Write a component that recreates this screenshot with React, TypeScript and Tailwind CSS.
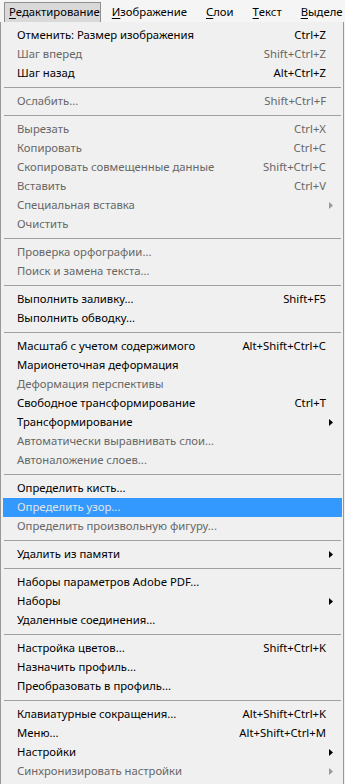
import React from "react";

type Item =
  | { sep: true }
  | { label: string; key?: string; off?: boolean; sub?: boolean; active?: boolean; sep?: false };

const items: Item[] = [
  { label: "Отменить: Размер изображения", key: "Ctrl+Z" },
  { label: "Шаг вперед", key: "Shift+Ctrl+Z", off: true },
  { label: "Шаг назад", key: "Alt+Ctrl+Z" },
  { sep: true },
  { label: "Ослабить...", key: "Shift+Ctrl+F", off: true },
  { sep: true },
  { label: "Вырезать", key: "Ctrl+X", off: true },
  { label: "Копировать", key: "Ctrl+C", off: true },
  { label: "Скопировать совмещенные данные", key: "Shift+Ctrl+C", off: true },
  { label: "Вставить", key: "Ctrl+V", off: true },
  { label: "Специальная вставка", off: true, sub: true },
  { label: "Очистить", off: true },
  { sep: true },
  { label: "Проверка орфографии...", off: true },
  { label: "Поиск и замена текста...", off: true },
  { sep: true },
  { label: "Выполнить заливку...", key: "Shift+F5" },
  { label: "Выполнить обводку..." },
  { sep: true },
  { label: "Масштаб с учетом содержимого", key: "Alt+Shift+Ctrl+C" },
  { label: "Марионеточная деформация" },
  { label: "Деформация перспективы", off: true },
  { label: "Свободное трансформирование", key: "Ctrl+T" },
  { label: "Трансформирование", sub: true },
  { label: "Автоматически выравнивать слои...", off: true },
  { label: "Автоналожение слоев...", off: true },
  { sep: true },
  { label: "Определить кисть..." },
  { label: "Определить узор...", active: true },
  { label: "Определить произвольную фигуру...", off: true },
  { sep: true },
  { label: "Удалить из памяти", sub: true },
  { sep: true },
  { label: "Наборы параметров Adobe PDF..." },
  { label: "Наборы", sub: true },
  { label: "Удаленные соединения..." },
  { sep: true },
  { label: "Настройка цветов...", key: "Shift+Ctrl+K" },
  { label: "Назначить профиль..." },
  { label: "Преобразовать в профиль..." },
  { sep: true },
  { label: "Клавиатурные сокращения...", key: "Alt+Shift+Ctrl+K" },
  { label: "Меню...", key: "Alt+Shift+Ctrl+M" },
  { label: "Настройки", sub: true },
  { label: "Синхронизировать настройки", off: true, sub: true },
];

const tabs = [
  { first: "И", rest: "зображение" },
  { first: "С", rest: "лои" },
  { first: "Т", rest: "екст" },
  { first: "В", rest: "ыделе" },
];

function Arrow({ off }: { off?: boolean }) {
  return (
    <svg width="4" height="7" viewBox="0 0 4 7" className="shrink-0">
      <path d="M0 0 L4 3.5 L0 7 Z" fill={off ? "#9a9a9a" : "#000"} />
    </svg>
  );
}

export default function App() {
  return (
    <div className="w-[345px] h-[784px] overflow-hidden bg-[#f0f0f0] text-[11.3px] font-['Noto_Sans',sans-serif]">
      {/* Menu bar */}
      <div className="h-[22px] flex items-end bg-[#f5f5f5] whitespace-nowrap">
        <div className="ml-[4px] mr-[1px] h-[20px] w-[104px] flex items-center pl-[4px] bg-[#d9d9d9] border border-b-0 border-[#8e8f8f] text-black">
          <span className="underline underline-offset-2">Р</span>едактирование
        </div>
        {tabs.map((t, i) => (
          <div key={i} className="h-[20px] flex items-center pl-[10px] pr-[9px] text-black">
            <span className="underline underline-offset-2">{t.first}</span>
            {t.rest}
          </div>
        ))}
      </div>

      {/* Dropdown */}
      <div className="border-l border-r border-[#979797] w-[344px] h-[762px] bg-[#f0f0f0] pt-[4px] pl-[2px] pr-[1px]">
        {items.map((it, i) =>
          it.sep ? (
            <div key={i} className="h-[9px] flex items-center px-[1px]">
              <div className="h-px w-full bg-[#a0a0a0]" />
            </div>
          ) : (
            <div
              key={i}
              className={`h-[19px] flex items-center pl-[14px] pr-[9px] whitespace-nowrap ${
                it.active ? "bg-[#3399ff] text-[#e4e4e4]" : it.off ? "text-[#676767]" : "text-black"
              }`}
            >
              <span className="flex-1">{it.label}</span>
              {it.key && <span className="mr-[7px]">{it.key}</span>}
              {it.sub && <Arrow off={it.off} />}
            </div>
          )
        )}
      </div>
    </div>
  );
}
